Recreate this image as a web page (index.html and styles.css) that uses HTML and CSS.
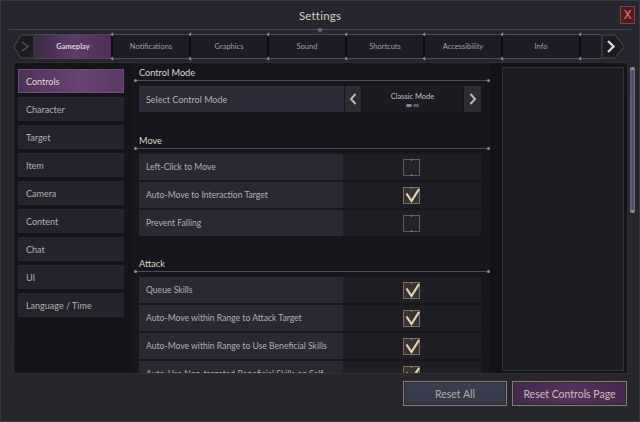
FILE: index.html
```html
<!DOCTYPE html>
<html>
<head>
<meta charset="utf-8">
<title>Settings</title>
<link rel="stylesheet" href="styles.css">
</head>
<body>
<div class="window">
  <header class="titlebar">
    <span class="spacer"></span>
    <h1 class="title">Settings</h1>
    <span class="close-wrap"><button class="close">X</button></span>
  </header>
  <nav class="tabs">
    <div class="tab-arrow left">
      <svg width="22" height="25" viewBox="0 0 22 25"><path d="M21 1 L8 1 L1 12.5 L8 24 L21 24 Z" fill="#1c1b22" stroke="#4d4850" stroke-width="1"/><path d="M9 8 L15 12.5 L9 17" fill="none" stroke="#5b5760" stroke-width="1.2"/></svg>
    </div>
    <div class="tab active">Gameplay</div>
    <div class="tab">Notifications</div>
    <div class="tab">Graphics</div>
    <div class="tab">Sound</div>
    <div class="tab">Shortcuts</div>
    <div class="tab">Accessibility</div>
    <div class="tab">Info</div>
    <div class="tab partial"></div>
    <div class="tab-arrow right">
      <svg width="24" height="25" viewBox="0 0 24 25"><path d="M1 1 L14 1 L23 12.5 L14 24 L1 24 Z" fill="#1c1b22" stroke="#4d4850" stroke-width="1"/><path d="M7 7 L12.5 12.5 L7 18" fill="none" stroke="#d6d2d6" stroke-width="2.4"/></svg>
    </div>
  </nav>
  <div class="body-row">
    <main class="frame">
      <aside class="sidebar">
        <div class="side-item active">Controls</div>
        <div class="side-item">Character</div>
        <div class="side-item">Target</div>
        <div class="side-item">Item</div>
        <div class="side-item">Camera</div>
        <div class="side-item">Content</div>
        <div class="side-item">Chat</div>
        <div class="side-item">UI</div>
        <div class="side-item">Language / Time</div>
      </aside>
      <section class="content">
        <div class="group">
          <div class="group-head">Control Mode</div>
          <div class="group-line"></div>
          <div class="rows">
            <div class="select-row">
              <div class="select-label">Select Control Mode</div>
              <div class="sel-arrow"><svg width="8" height="12" viewBox="0 0 8 12"><path d="M6.5 1 L2 6 L6.5 11" fill="none" stroke="#b9b6bd" stroke-width="2"/></svg></div>
              <div class="sel-value">
                <span class="sel-text">Classic Mode</span>
                <span class="dots"><i class="dot on"></i><i class="dot"></i></span>
              </div>
              <div class="sel-arrow"><svg width="8" height="12" viewBox="0 0 8 12"><path d="M1.5 1 L6 6 L1.5 11" fill="none" stroke="#b9b6bd" stroke-width="2"/></svg></div>
            </div>
          </div>
        </div>
        <div class="group">
          <div class="group-head">Move</div>
          <div class="group-line"></div>
          <div class="rows">
            <div class="row"><div class="label">Left-Click to Move</div><div class="value"><span class="check"></span></div></div>
            <div class="row"><div class="label">Auto-Move to Interaction Target</div><div class="value"><span class="check on"><svg width="17" height="17" viewBox="0 0 17 17"><path d="M2.5 6.5 L7.5 14 L15 2" fill="none" stroke="#e4d3b6" stroke-width="2.2"/></svg></span></div></div>
            <div class="row"><div class="label">Prevent Falling</div><div class="value"><span class="check"></span></div></div>
          </div>
        </div>
        <div class="group">
          <div class="group-head">Attack</div>
          <div class="group-line"></div>
          <div class="rows">
            <div class="row"><div class="label">Queue Skills</div><div class="value"><span class="check on"><svg width="17" height="17" viewBox="0 0 17 17"><path d="M2.5 6.5 L7.5 14 L15 2" fill="none" stroke="#e4d3b6" stroke-width="2.2"/></svg></span></div></div>
            <div class="row"><div class="label">Auto-Move within Range to Attack Target</div><div class="value"><span class="check on"><svg width="17" height="17" viewBox="0 0 17 17"><path d="M2.5 6.5 L7.5 14 L15 2" fill="none" stroke="#e4d3b6" stroke-width="2.2"/></svg></span></div></div>
            <div class="row"><div class="label">Auto-Move within Range to Use Beneficial Skills</div><div class="value"><span class="check on"><svg width="17" height="17" viewBox="0 0 17 17"><path d="M2.5 6.5 L7.5 14 L15 2" fill="none" stroke="#e4d3b6" stroke-width="2.2"/></svg></span></div></div>
            <div class="row"><div class="label">Auto-Use Non-targeted Beneficial Skills on Self</div><div class="value"><span class="check on"><svg width="17" height="17" viewBox="0 0 17 17"><path d="M2.5 6.5 L7.5 14 L15 2" fill="none" stroke="#e4d3b6" stroke-width="2.2"/></svg></span></div></div>
          </div>
        </div>
      </section>
      <div class="desc-col"><div class="desc-panel"></div></div>
    </main>
    <div class="scrollbar"><div class="thumb"></div></div>
  </div>
  <footer class="footer">
    <button class="btn slate">Reset All</button>
    <button class="btn purple">Reset Controls Page</button>
  </footer>
</div>
</body>
</html>
```

FILE: styles.css
```css
* { box-sizing: border-box; }
html, body { margin: 0; padding: 0; }
body {
  width: 640px;
  height: 422px;
  overflow: hidden;
  background: #29282f;
  font-family: Lato, "Noto Sans", sans-serif;
  color: #bdb6b0;
}
.window {
  width: 640px;
  height: 422px;
  display: flex;
  flex-direction: column;
  border: 1px solid #3a3940;
  background: linear-gradient(180deg, #262631 0%, #25252d 15%, #27262c 100%);
}
.titlebar {
  height: 29px;
  display: grid;
  grid-template-columns: 1fr auto 1fr;
  align-items: center;
  border-bottom: 1px solid #48444e;
  margin: 0 8px;
  position: relative;
}
.titlebar::after {
  content: "";
  position: absolute;
  left: 50%;
  bottom: -3px;
  width: 4px;
  height: 4px;
  margin-left: -2px;
  background: #6a656e;
  transform: rotate(45deg);
}
.title {
  margin: 0;
  font-size: 11.5px;
  font-weight: 400;
  color: #d9d0c2;
  letter-spacing: 0.2px;
  padding-top: 1px;
}
.close-wrap { display: flex; justify-content: flex-end; margin-right: -4px; }
.close {
  width: 15px;
  height: 18px;
  padding: 0;
  border: 1px solid #8b3f40;
  background: #4d1c20;
  color: #d77c78;
  font-family: "DejaVu Sans", sans-serif;
  font-size: 12px;
  line-height: 16px;
  margin-top: -1px;
}
.tabs {
  margin: 4px 14px 0 12px;
  height: 25px;
  display: flex;
  align-items: stretch;
}
.tab-arrow { flex: none; display: flex; }
.tab-arrow svg { display: block; }
.tab {
  width: 78px;
  flex: none;
  display: flex;
  align-items: center;
  justify-content: center;
  font-size: 7.5px;
  color: #a19ca4;
  background: #1d1c24;
  border-top: 1px solid #4f4a52;
  border-bottom: 1px solid #4f4a52;
  border-right: 2px solid #0c0c10;
  position: relative;
}
.tab::before, .tab::after {
  content: "";
  position: absolute;
  right: -3px;
  width: 3px;
  height: 3px;
  background: #8a848c;
  transform: rotate(45deg);
}
.tab::before { top: -2px; }
.tab::after { bottom: -2px; }
.tab.active {
  background: linear-gradient(90deg, #3e2a49 0%, #5b3c67 50%, #4c3155 100%);
  color: #ddd3d7;
  font-weight: 700;
}
.tab.partial { width: auto; flex: 1; border-right: none; }
.tab.partial::before, .tab.partial::after { display: none; }
.body-row {
  margin-top: 3px;
  display: flex;
  align-items: flex-start;
}
.frame {
  margin-left: 12px;
  width: 615px;
  height: 312px;
  border: 1px solid #2f2e35;
  background: #16151b;
  display: flex;
  overflow: hidden;
}
.sidebar {
  width: 117px;
  flex: none;
  padding: 6px 0 0 4px;
  display: flex;
  flex-direction: column;
  gap: 4px;
  background: #151419;
}
.side-item {
  width: 106px;
  height: 24px;
  display: flex;
  align-items: center;
  padding-left: 7px;
  font-size: 9px;
  color: #b7afa9;
  background: #24232d;
  border: 1px solid #282731;
}
.side-item.active {
  background: linear-gradient(90deg, #4d3357 0%, #6b4375 60%, #5a3963 100%);
  color: #e2d8d2;
  border-color: #6e4d78;
}
.content {
  width: 359px;
  flex: none;
  padding: 1px 1px 0 4px;
  background: #17161c;
}
.group { margin-bottom: 20px; }
.group:nth-child(2) { margin-bottom: 19px; }
.group-head {
  height: 16px;
  line-height: 14px;
  padding: 2px 0 0 4px;
  font-size: 9.2px;
  color: #ddd5cb;
}
.group-line {
  height: 1px;
  background: #4e4a53;
  position: relative;
}
.group-line::before, .group-line::after {
  content: "";
  position: absolute;
  top: -1px;
  width: 3px;
  height: 3px;
  border-radius: 50%;
  background: #8d878f;
}
.group-line::before { left: -1px; }
.group-line::after { right: -1px; }
.rows {
  margin: 5px 0 0 4px;
  width: 342px;
  display: flex;
  flex-direction: column;
  gap: 2px;
}
.row {
  height: 26px;
  display: grid;
  grid-template-columns: 204px 138px;
}
.label {
  background: #292934;
  display: flex;
  align-items: center;
  padding-left: 7px;
  font-size: 8.6px;
  color: #b5afab;
  white-space: nowrap;
  overflow: hidden;
}
.value {
  background: #1f1e25;
  display: flex;
  align-items: center;
  justify-content: center;
}
.check {
  width: 17px;
  height: 17px;
  border: 1px solid #625c5a;
  background: #24222a;
  position: relative;
  display: block;
  margin-left: -1px;
}
.check::before, .check::after {
  content: "";
  position: absolute;
  left: 7px;
  width: 1px;
  height: 2px;
  background: #8c847e;
}
.check::before { top: -1px; }
.check::after { bottom: -1px; }
.check.on { background: #39332f; border-color: #7a6e66; }
.check svg { position: absolute; left: 0; top: -1px; }
.select-row {
  height: 26px;
  display: flex;
  gap: 1px;
}
.select-label {
  width: 205px;
  background: #2a2b37;
  display: flex;
  align-items: center;
  padding-left: 7px;
  font-size: 9px;
  color: #b7b1ad;
}
.sel-arrow {
  width: 16px;
  background: #2d2c33;
  display: flex;
  align-items: center;
  justify-content: center;
}
.sel-arrow:last-child { width: 17px; }
.sel-value {
  flex: 1;
  background: #1c1b21;
  display: flex;
  flex-direction: column;
  align-items: center;
  justify-content: center;
  gap: 3px;
  padding-top: 1px;
}
.sel-text { font-size: 7.5px; color: #c4bec0; }
.dots { display: flex; gap: 1px; }
.dot {
  width: 6px;
  height: 3px;
  border-radius: 2px;
  background: #5a5866;
  display: block;
}
.dot.on { background: #9a72a6; }
.desc-col {
  flex: 1;
  padding: 4px 3px 2px 12px;
  background: #141318;
}
.desc-panel {
  height: 100%;
  background: #1d1c21;
  border: 1px solid #333238;
}
.scrollbar {
  margin: 5px 0 0 2px;
  width: 5px;
  height: 146px;
  background: #23222a;
  border-radius: 2px;
  position: relative;
}
.thumb {
  height: 100%;
  background: linear-gradient(90deg, #6d6b8a 0%, #4b4a68 50%, #6d6b8a 100%);
  border-radius: 2px;
  border-top: 3px solid #8f8a98;
  border-bottom: 3px solid #8f8a98;
}
.footer {
  flex: 1;
  display: flex;
  justify-content: flex-end;
  align-items: flex-start;
  gap: 5px;
  padding: 7px 12px 0 0;
}
.btn {
  height: 25px;
  border: 1px solid #8c7f78;
  box-shadow: inset 0 0 0 1px #2a2830;
  font-family: Lato, "Noto Sans", sans-serif;
  font-size: 10.5px;
  color: #c7beb7;
  padding: 0;
}
.btn.slate {
  width: 104px;
  background: linear-gradient(180deg, #3c3f51 0%, #353849 100%);
  color: #b3aca8;
}
.btn.purple {
  width: 115px;
  background: linear-gradient(90deg, #45294f 0%, #53325e 50%, #46294f 100%);
}
```
